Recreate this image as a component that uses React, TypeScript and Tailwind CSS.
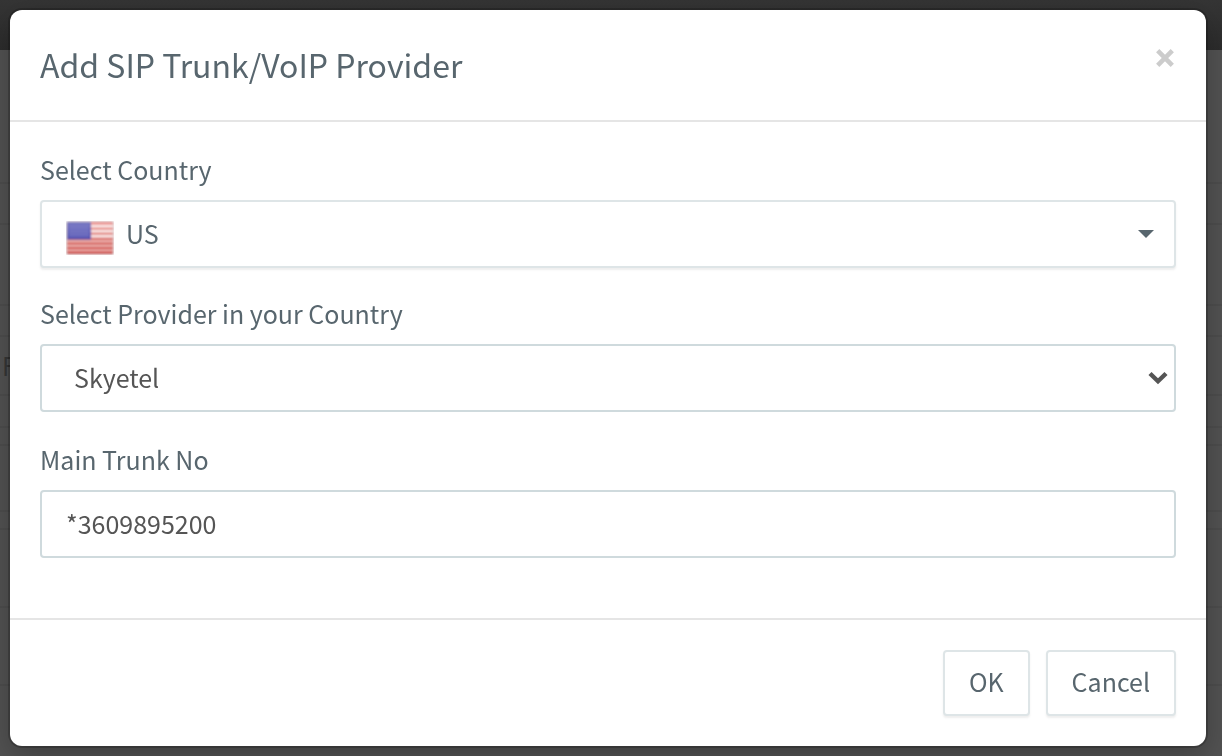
import React, { useState } from 'react';

const providers = ['Skyetel', 'Twilio', 'Flowroute', 'VoIP.ms'];
const countries = ['US', 'CA', 'GB', 'AU'];

function UsFlag() {
  return (
    <svg viewBox="0 0 48 34" className="w-12 h-[34px]" aria-hidden="true">
      <defs>
        <linearGradient id="flagRed" x1="0" y1="0" x2="0" y2="1">
          <stop offset="0" stopColor="#ee9a97" />
          <stop offset="0.5" stopColor="#dc7a76" />
          <stop offset="1" stopColor="#cf4a44" />
        </linearGradient>
        <linearGradient id="flagBlue" x1="0" y1="0" x2="0" y2="1">
          <stop offset="0" stopColor="#7474c0" />
          <stop offset="1" stopColor="#4b4bae" />
        </linearGradient>
        <filter id="flagSoft" x="-5%" y="-5%" width="110%" height="110%">
          <feGaussianBlur stdDeviation="0.8" />
        </filter>
      </defs>
      <g filter="url(#flagSoft)">
        <rect x="0" y="0" width="48" height="34" rx="2" fill="#d3c6c8" />
        <rect x="1" y="1" width="46" height="32" rx="1" fill="url(#flagRed)" />
        {[4, 9, 14].map(y => <rect key={y} x="25" y={y} width="22" height="2.4" fill="#fdf0ef" />)}
        {[19.5, 24, 28.5].map(y => <rect key={y} x="1" y={y} width="46" height="1.6" fill="#f2c3c0" />)}
        <rect x="1" y="1" width="24" height="17.5" fill="url(#flagBlue)" />
        <rect x="3" y="3" width="20" height="13" fill="#8585cc" opacity="0.45" />
      </g>
    </svg>
  );
}

export default function App() {
  const [country, setCountry] = useState('US');
  const [provider, setProvider] = useState('Skyetel');
  const [trunkNo, setTrunkNo] = useState('*3609895200');

  return (
    <div className="h-screen overflow-hidden bg-[#525252] font-['Noto_Sans_CJK_SC',sans-serif] text-[#58666e]">
      {/* Page behind the dialog */}
      <div aria-hidden="true" className="*:border-b-2 *:border-[#4d4d4d]">
        <div className="h-[50px] border-none bg-linear-to-b from-[#353535] to-[#2c2c2c]" />
        <div className="h-[134px]" />
        <div className="h-[41px]" />
        <div className="h-[81px]" />
        <div className="h-[31px]" />
        <div className="h-[59px] px-0.5 text-[25px] leading-[56px] text-[#363636]">F</div>
        <div className="h-8" />
        <div className="h-[18px]" />
        <div className="h-[66px]" />
        <div className="h-[18px]" />
        <div className="h-[78px]" />
        <div className="h-[78px]" />
      </div>

      <div className="fixed inset-0 overflow-y-auto py-2.5 pl-2.5 pr-4">
        <div role="dialog" aria-labelledby="dialog-title" className="rounded-[12px] bg-white shadow-[0_0_0_2px_rgba(0,0,0,0.2),0_10px_30px_rgba(0,0,0,0.25)]">
          <div className="flex items-start justify-between border-b-2 border-[#e5e5e5] px-[30px] pt-[30px] pb-8">
            <h3 id="dialog-title" className="text-[32px] leading-[48px]">Add SIP Trunk/VoIP Provider</h3>
            <button type="button" aria-label="Close" className="flex h-9 w-[22px] items-center justify-center text-[#cccccc]">
              <svg viewBox="0 0 18 18" className="size-[18px]" fill="none" stroke="currentColor" strokeWidth="4.6">
                <path d="M1.7 1.7 16.3 16.3M16.3 1.7 1.7 16.3" />
              </svg>
            </button>
          </div>

          <form id="trunk-form" className="px-[30px] pt-[30px] pb-[60px]" onSubmit={e => e.preventDefault()}>
            <div className="mb-7">
              <label htmlFor="country" className="mb-3.5 block text-[25px] leading-[34px]">Select Country</label>
              <div className="relative">
                <select
                  id="country"
                  value={country}
                  onChange={e => setCountry(e.target.value)}
                  className="h-[68px] w-full appearance-none rounded-sm border-2 border-[#dee5e7] bg-white pl-[84px] pr-12 text-[25px] shadow-[0_2px_2px_rgba(90,90,90,0.1)]"
                >
                  {countries.map(c => <option key={c}>{c}</option>)}
                </select>
                <span className="pointer-events-none absolute inset-y-0 left-[26px] flex items-center pt-2"><UsFlag /></span>
                <span className="pointer-events-none absolute inset-y-0 right-[22px] flex items-center">
                  <svg viewBox="0 0 16 8" className="h-2 w-4" fill="currentColor"><path d="M0 0h16L8 8z" /></svg>
                </span>
              </div>
            </div>

            <div className="mb-[30px]">
              <label htmlFor="provider" className="mb-3.5 block text-[25px] leading-[34px]">Select Provider in your Country</label>
              <div className="relative">
                <select
                  id="provider"
                  value={provider}
                  onChange={e => setProvider(e.target.value)}
                  className="h-[68px] w-full appearance-none rounded-sm border-2 border-[#cfdadd] bg-white pl-8 pr-12 text-[25px] text-[#555555]"
                >
                  {providers.map(p => <option key={p}>{p}</option>)}
                </select>
                <span className="pointer-events-none absolute inset-y-0 right-2 flex items-center text-[#555555]">
                  <svg viewBox="0 0 20 14" className="h-3.5 w-5" fill="none" stroke="currentColor" strokeWidth="4.4">
                    <path d="M2 2.5 10 10.3 18 2.5" />
                  </svg>
                </span>
              </div>
            </div>

            <div>
              <label htmlFor="trunk" className="mb-3.5 block text-[25px] leading-[34px]">Main Trunk No</label>
              <input
                id="trunk"
                type="text"
                value={trunkNo}
                onChange={e => setTrunkNo(e.target.value)}
                className="h-[68px] w-full rounded-sm border-2 border-[#cfdadd] bg-white px-6 pb-0.5 text-[25px] text-[#555555]"
              />
            </div>
          </form>

          <div className="flex justify-end gap-4 border-t-2 border-[#e5e5e5] p-[30px]">
            <button type="submit" form="trunk-form" className="h-[66px] rounded-sm border-2 border-[#dee5e7] bg-white px-6 pb-0.5 text-[25px] shadow-[0_2px_2px_rgba(90,90,90,0.1)]">OK</button>
            <button type="button" className="h-[66px] rounded-sm border-2 border-[#dee5e7] bg-white px-6 pb-0.5 text-[25px] shadow-[0_2px_2px_rgba(90,90,90,0.1)]">Cancel</button>
          </div>
        </div>
      </div>
    </div>
  );
}
